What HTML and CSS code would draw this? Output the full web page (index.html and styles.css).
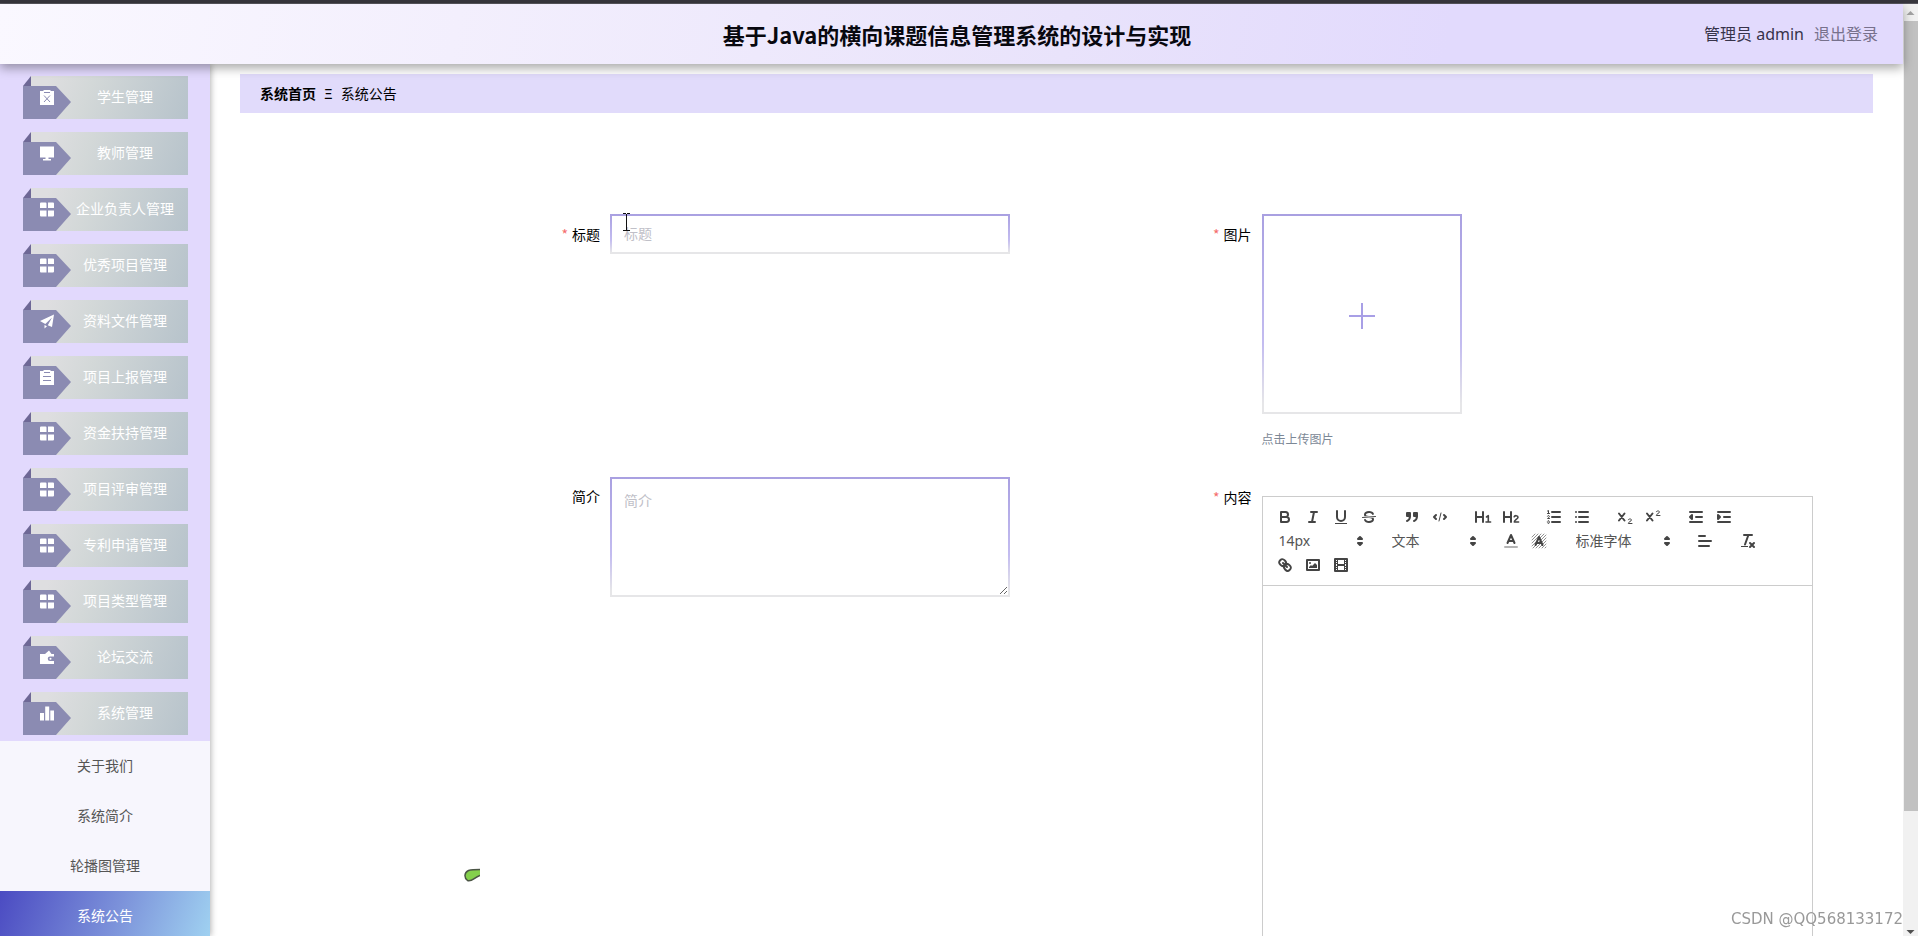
FILE: index.html
```html
<!DOCTYPE html>
<html lang="zh-CN">
<head>
<meta charset="utf-8">
<title>基于Java的横向课题信息管理系统的设计与实现</title>
<link rel="stylesheet" href="styles.css">
</head>
<body>
<svg class="sprite" aria-hidden="true">
  <symbol id="ribbon" viewBox="0 0 48 43"><path fill="#6e6896" d="M0 10L8 0V10Z"/><path fill="#8b8bb2" d="M0 10H33L48 26L33 43H0Z"/></symbol>
  <symbol id="i-grid" viewBox="0 0 14 14"><path fill="#fff" d="M1 0h4.500q1 0 1 1v4.500h-6.500v-4.500q0-1 1-1zM8 0h5q1 0 1 1v4.500h-6zM0 8h6.500v6h-5.500q-1 0-1-1zM8 8h6v5q0 1-1 1h-5z"/></symbol>
  <symbol id="i-clipx" viewBox="0 0 14 15"><path fill="#fff" d="M0 1h3.500V0h7v1H14v14H0z"/><path fill="none" stroke="#8b8bb2" d="M4 2.500h6M4 5.500l6 6.500M10 5.500L4 12"/></symbol>
  <symbol id="i-clip" viewBox="0 0 14 15"><path fill="#fff" d="M0 1h3.500V0h7v1H14v14H0z"/><path fill="none" stroke="#8b8bb2" d="M4 2.500h6M3 6.500h8M3 10.500h8"/></symbol>
  <symbol id="i-screen" viewBox="0 0 14 14"><path fill="#fff" d="M0 0h14v11H0zM5.500 11h3v1.500H11V14H3v-1.500h2.500z"/></symbol>
  <symbol id="i-plane" viewBox="0 0 14 14"><path fill="#fff" d="M14 0L12 12.500L7.800 10.700L12 3L5.300 9.600L0 6.500ZM4.500 10.500L7 11.700L4.500 14Z"/></symbol>
  <symbol id="i-wallet" viewBox="0 0 14 14"><path fill="#fff" d="M0 3.500h5L9 0l2.500 3.500H14V6h-4a2.200 2.200 0 0 0 0 4.500h4V13.500H0z"/><circle cx="10.500" cy="8.200" r="1" fill="#fff"/></symbol>
  <symbol id="i-chart" viewBox="0 0 14 14"><path fill="#fff" d="M0 6.500h4V14H0zM5.200 0h4v14h-4zM10.300 4H14v10h-3.700z"/></symbol>
  <symbol id="i-arrows" viewBox="0 0 18 18"><path fill="#444" stroke="#444" stroke-width="2" stroke-linejoin="round" d="M7 11L9 13L11 11ZM7 7L9 5L11 7Z"/></symbol>
</svg>

<div class="window-edge"></div>
<div class="window">
  <div class="app">
    <header class="topbar">
      <h1 class="topbar-title">基于Java的横向课题信息管理系统的设计与实现</h1>
      <div class="topbar-user"><span>管理员 admin</span><a class="logout" href="#">退出登录</a></div>
    </header>

    <div class="workspace">
      <nav class="sidebar">
        <ul class="menu">
          <li><button class="menu-item" type="button"><span class="tag"><svg class="tag-shape"><use href="#ribbon"/></svg><svg class="tag-icon"><use href="#i-clipx"/></svg></span><span class="menu-label">学生管理</span></button></li>
          <li><button class="menu-item" type="button"><span class="tag"><svg class="tag-shape"><use href="#ribbon"/></svg><svg class="tag-icon"><use href="#i-screen"/></svg></span><span class="menu-label">教师管理</span></button></li>
          <li><button class="menu-item" type="button"><span class="tag"><svg class="tag-shape"><use href="#ribbon"/></svg><svg class="tag-icon"><use href="#i-grid"/></svg></span><span class="menu-label">企业负责人管理</span></button></li>
          <li><button class="menu-item" type="button"><span class="tag"><svg class="tag-shape"><use href="#ribbon"/></svg><svg class="tag-icon"><use href="#i-grid"/></svg></span><span class="menu-label">优秀项目管理</span></button></li>
          <li><button class="menu-item" type="button"><span class="tag"><svg class="tag-shape"><use href="#ribbon"/></svg><svg class="tag-icon"><use href="#i-plane"/></svg></span><span class="menu-label">资料文件管理</span></button></li>
          <li><button class="menu-item" type="button"><span class="tag"><svg class="tag-shape"><use href="#ribbon"/></svg><svg class="tag-icon"><use href="#i-clip"/></svg></span><span class="menu-label">项目上报管理</span></button></li>
          <li><button class="menu-item" type="button"><span class="tag"><svg class="tag-shape"><use href="#ribbon"/></svg><svg class="tag-icon"><use href="#i-grid"/></svg></span><span class="menu-label">资金扶持管理</span></button></li>
          <li><button class="menu-item" type="button"><span class="tag"><svg class="tag-shape"><use href="#ribbon"/></svg><svg class="tag-icon"><use href="#i-grid"/></svg></span><span class="menu-label">项目评审管理</span></button></li>
          <li><button class="menu-item" type="button"><span class="tag"><svg class="tag-shape"><use href="#ribbon"/></svg><svg class="tag-icon"><use href="#i-grid"/></svg></span><span class="menu-label">专利申请管理</span></button></li>
          <li><button class="menu-item" type="button"><span class="tag"><svg class="tag-shape"><use href="#ribbon"/></svg><svg class="tag-icon"><use href="#i-grid"/></svg></span><span class="menu-label">项目类型管理</span></button></li>
          <li><button class="menu-item" type="button"><span class="tag"><svg class="tag-shape"><use href="#ribbon"/></svg><svg class="tag-icon"><use href="#i-wallet"/></svg></span><span class="menu-label">论坛交流</span></button></li>
          <li><button class="menu-item" type="button"><span class="tag"><svg class="tag-shape"><use href="#ribbon"/></svg><svg class="tag-icon"><use href="#i-chart"/></svg></span><span class="menu-label">系统管理</span></button></li>
        </ul>
        <ul class="submenu">
          <li><a class="submenu-item" href="#">关于我们</a></li>
          <li><a class="submenu-item" href="#">系统简介</a></li>
          <li><a class="submenu-item" href="#">轮播图管理</a></li>
          <li><a class="submenu-item active" href="#" aria-current="page">系统公告</a></li>
        </ul>
      </nav>

      <main class="content">
        <div class="breadcrumb"><a class="crumb-home" href="#">系统首页</a><span>Ξ</span><span>系统公告</span></div>

        <form class="notice-form">
          <div class="field">
            <label class="field-label required" for="title">标题</label>
            <div class="field-body">
              <input class="text-input" id="title" type="text" placeholder="标题">
              <svg class="text-cursor" viewBox="0 0 9 18" aria-hidden="true"><path fill="none" stroke="#111" d="M1 .5h3M5 .5h3M4.500 1v16M1 17.500h7"/></svg>
            </div>
          </div>
          <div class="field">
            <label class="field-label required" for="picture">图片</label>
            <div class="field-body">
              <button class="upload" id="picture" type="button" aria-label="点击上传图片"><svg class="plus" viewBox="0 0 26 26"><path stroke="#a89fe6" stroke-width="2" d="M13 0v26M0 13h26"/></svg></button>
              <p class="upload-tip">点击上传图片</p>
            </div>
          </div>
          <div class="field">
            <label class="field-label" for="summary">简介</label>
            <div class="field-body">
              <textarea class="text-area" id="summary" placeholder="简介"></textarea>
            </div>
          </div>
          <div class="field">
            <span class="field-label required" id="body-label">内容</span>
            <div class="field-body editor">
              <div class="toolbar">
                <span class="group">
                  <button class="tool" type="button" aria-label="加粗"><svg viewBox="0 0 18 18"><path d="M5 4H9.500A2.500 2.500 0 0 1 9.500 9H5ZM5 9h5.500A2.500 2.500 0 0 1 10.500 14H5Z"/></svg></button>
                  <button class="tool" type="button" aria-label="斜体"><svg viewBox="0 0 18 18"><path d="M7 4H13M5 14H11M8 14L10 4"/></svg></button>
                  <button class="tool" type="button" aria-label="下划线"><svg viewBox="0 0 18 18"><path d="M5 3V9a4 4 0 0 0 8 0V3"/><rect class="solid" x="3" y="15" width="12" height="1"/></svg></button>
                  <button class="tool" type="button" aria-label="删除线"><svg viewBox="0 0 18 18"><path class="thin" d="M15.500 8.500L2.500 9.500"/><path class="solid" d="M9 8C6.500 7.800 6 7.500 6 6.500 6 5.800 7.300 5 9 5c1.600 0 2.800.7 3 1.300a1 1 0 0 0 1.900-.6C13.400 4.100 11.400 3 9 3 6.200 3 4 4.500 4 6.500a3.200 3.200 0 0 0 .5 1.800ZM9 10C11.500 10.200 12 10.500 12 11.500c0 .7-1.300 1.500-3 1.500-1.600 0-2.800-.7-3-1.300a1 1 0 1 0-1.900.6C4.600 13.900 6.600 15 9 15c2.800 0 5-1.500 5-3.500a3.200 3.200 0 0 0-.5-1.800Z"/></svg></button>
                </span>
                <span class="group">
                  <button class="tool" type="button" aria-label="引用"><svg viewBox="0 0 18 18"><path class="both" d="M4 5h3v3H4zM11 5h3v3h-3z"/><path d="M7 8c0 4-3 5-3 5M14 8c0 4-3 5-3 5"/></svg></button>
                  <button class="tool" type="button" aria-label="代码"><svg viewBox="0 0 18 18"><path d="M5 7L3 9L5 11M13 7L15 9L13 11"/><path class="thin" d="M10 5L8 13"/></svg></button>
                </span>
                <span class="group">
                  <button class="tool" type="button" aria-label="标题1"><svg viewBox="0 0 18 18"><path d="M2 4V14M9 4V14M2 9H9"/><path class="mid" d="M12.500 9L14.300 7.700V14M12 14H16.600"/></svg></button>
                  <button class="tool" type="button" aria-label="标题2"><svg viewBox="0 0 18 18"><path d="M2 4V14M9 4V14M2 9H9"/><path class="mid" d="M12.200 8.700C12.600 7.300 16 7.200 16 9.200C16 11 12.300 12 12.300 14H16.600"/></svg></button>
                </span>
                <span class="group">
                  <button class="tool" type="button" aria-label="有序列表"><svg viewBox="0 0 18 18"><path d="M7 4H15M7 9H15M7 14H15"/><path class="thin" d="M2.500 3L3.500 2.500V5.500M2.500 5.500H4.500M4.500 10.500h-2c0-.2 1.900-1.100 1.900-2.200A1 1 0 0 0 2.500 8.200M2.500 14.800a1 1 0 0 0 1.900-.1A.7.7 0 0 0 3.700 14a.7.7 0 0 0 .6-.7 1 1 0 0 0-1.800-.1"/></svg></button>
                  <button class="tool" type="button" aria-label="无序列表"><svg viewBox="0 0 18 18"><path d="M6 4H15M6 9H15M6 14H15M3 4v.01M3 9v.01M3 14v.01"/></svg></button>
                </span>
                <span class="group">
                  <button class="tool" type="button" aria-label="下标"><svg viewBox="0 0 18 18"><path d="M3 5.500L8.500 12.500M8.500 5.500L3 12.500"/><path class="thin" d="M12.300 11.700C12.500 10.600 15.500 10.600 15.500 12C15.500 13.200 12.300 13.800 12.300 15.500H16"/></svg></button>
                  <button class="tool" type="button" aria-label="上标"><svg viewBox="0 0 18 18"><path d="M3 5.500L8.500 12.500M8.500 5.500L3 12.500"/><path class="thin" d="M12.300 3.700C12.500 2.600 15.500 2.600 15.500 4C15.500 5.200 12.300 5.800 12.300 7.500H16"/></svg></button>
                </span>
                <span class="group">
                  <button class="tool" type="button" aria-label="减少缩进"><svg viewBox="0 0 18 18"><path d="M3 14H15M3 4H15M9 9H15"/><path class="both" d="M5 7V11L3 9Z"/></svg></button>
                  <button class="tool" type="button" aria-label="增加缩进"><svg viewBox="0 0 18 18"><path d="M3 14H15M3 4H15M9 9H15"/><path class="both" d="M3 7V11L5 9Z"/></svg></button>
                </span>
                <span class="group picker">
                  <select class="picker-select" aria-label="字号"><option>14px</option></select><svg class="picker-arrow"><use href="#i-arrows"/></svg>
                </span>
                <span class="group picker">
                  <select class="picker-select" aria-label="段落格式"><option>文本</option></select><svg class="picker-arrow"><use href="#i-arrows"/></svg>
                </span>
                <span class="group">
                  <button class="tool" type="button" aria-label="文字颜色"><svg viewBox="0 0 18 18"><path opacity=".4" d="M3 15H15"/><path d="M5.500 11L9 3L12.500 11M11.600 9H6.400"/></svg></button>
                  <button class="tool" type="button" aria-label="背景颜色"><svg viewBox="0 0 18 18"><path class="hair" d="M2 5L5 2M2 8L8 2M2 11L11 2M2 14L14 2M3 16L16 3M6 16L16 6M9 16L16 9M12 16L16 12M15 16L16 15"/><path d="M5.500 13L9 5L12.500 13M11.600 11H6.400"/></svg></button>
                </span>
                <span class="group picker picker-wide">
                  <select class="picker-select" aria-label="字体"><option>标准字体</option></select><svg class="picker-arrow"><use href="#i-arrows"/></svg>
                </span>
                <span class="group">
                  <button class="tool" type="button" aria-label="对齐"><svg viewBox="0 0 18 18"><path d="M3 9H15M3 14H13M3 4H9"/></svg></button>
                </span>
                <span class="group">
                  <button class="tool" type="button" aria-label="清除格式"><svg viewBox="0 0 18 18"><path d="M5 3H13M6 12.500L9.400 3M11 11L15 15M15 11L11 15"/><rect class="solid" x="2" y="14" width="7" height="1"/></svg></button>
                </span>
                <span class="group">
                  <button class="tool" type="button" aria-label="链接"><svg viewBox="0 0 18 18"><path d="M7 7L11 11M8.900 4.577a3.476 3.476 0 0 1 .36 4.679A3.476 3.476 0 0 1 4.577 8.900C3.185 7.500 2.035 6.400 4.217 4.217S7.500 3.185 8.900 4.577ZM13.423 9.100a3.476 3.476 0 0 0-4.679-.36 3.476 3.476 0 0 0 .36 4.679c1.392 1.392 2.500 2.542 4.679.36S14.815 10.500 13.423 9.100Z"/></svg></button>
                  <button class="tool" type="button" aria-label="图片"><svg viewBox="0 0 18 18"><rect x="3" y="4" width="12" height="10"/><circle class="solid" cx="6" cy="7" r="1"/><path class="solid" d="M5 12V11L7 9L8 10L11 7L13 9V12Z"/></svg></button>
                  <button class="tool" type="button" aria-label="视频"><svg viewBox="0 0 18 18"><rect x="3" y="3" width="12" height="12"/><path class="solid" d="M5 3h1v12H5zM12 3h1v12h-1zM5 8h8v2H5zM3 5h3v1H3zM3 7h3v1H3zM3 10h3v1H3zM3 12h3v1H3zM12 5h3v1h-3zM12 7h3v1h-3zM12 10h3v1h-3zM12 12h3v1h-3z"/></svg></button>
                </span>
              </div>
              <div class="editor-area" contenteditable="true" role="textbox" aria-labelledby="body-label"></div>
            </div>
          </div>
        </form>
      </main>
    </div>
  </div>

  <div class="scrollbar" aria-hidden="true">
    <svg class="scroll-arrow" viewBox="0 0 14 17"><path fill="#a3a3a3" d="M3 11L7 7L11 11Z"/></svg>
    <div class="scroll-track"><div class="scroll-thumb"></div></div>
    <svg class="scroll-arrow" viewBox="0 0 14 17"><path fill="#505050" d="M3 11L7 15L11 11Z"/></svg>
  </div>
</div>

<svg class="leaf" viewBox="0 0 16 14" aria-hidden="true"><path fill="#84d04c" d="M16 1.500C12 1.500 8 1.500 4.500 2.500C0 4.500 0 10 3.500 12.500C8 14 10 9.500 16 7.500Z"/><path fill="none" stroke="#4b5545" stroke-width="1.500" d="M16 1.500C12 1.500 8 1.500 4.500 2.500C0 4.500 0 10 3.500 12.500C8 14 10 9.500 16 7.500"/></svg>
<div class="watermark">CSDN @QQ568133172</div>
</body>
</html>
```
FILE: styles.css
```css
* {
  box-sizing: border-box;
}

body {
  margin: 0;
  height: 100vh;
  display: flex;
  flex-direction: column;
  overflow: hidden;
  background: #fff;
  color: #000;
  font: 14px/20px "Noto Sans", "Noto Sans CJK SC", sans-serif;
}

button,
input,
textarea,
select {
  margin: 0;
  padding: 0;
  border: 0;
  background: none;
  font: inherit;
  color: inherit;
}

ul {
  margin: 0;
  padding: 0;
  list-style: none;
}

a {
  color: inherit;
  text-decoration: none;
}

.sprite {
  position: absolute;
  width: 0;
  height: 0;
}

.window-edge {
  flex: none;
  height: 4px;
  background: linear-gradient(#37363d 75%, #77767e);
}

.window {
  flex: 1;
  min-height: 0;
  display: flex;
}

.app {
  flex: 1;
  min-width: 0;
  display: flex;
  flex-direction: column;
}

/* Top bar */
.topbar {
  position: relative;
  z-index: 2;
  flex: none;
  display: grid;
  grid-template-columns: 1fr auto 1fr;
  align-items: center;
  height: 60px;
  padding: 0 25px 0 36px;
  background: linear-gradient(100deg, #faf8ff, #f3effd 24%, #e9e3fb 56%, #e2dafd 76%);
  box-shadow: 0 4px 10px rgba(0, 0, 0, 0.35);
}

.topbar-title {
  grid-column: 2;
  margin: 0;
  font-family: "Noto Sans CJK SC", sans-serif;
  font-size: 22px;
  line-height: 32px;
  font-weight: 700;
  color: #08080f;
}

.topbar-user {
  display: flex;
  justify-content: flex-end;
  gap: 10px;
  font-size: 16px;
  line-height: 24px;
  color: #37334a;
}

.logout {
  color: #77718c;
}

.workspace {
  flex: 1;
  min-height: 0;
  display: flex;
}

/* Sidebar */
.sidebar {
  flex: none;
  width: 210px;
  background: #e2d9fd;
  box-shadow: 1px 0 6px rgba(0, 0, 0, 0.3);
}

.menu {
  display: flex;
  flex-direction: column;
  gap: 13px;
  padding: 12px 22px 6px 23px;
}

.menu li {
  display: flex;
}

.menu-item {
  display: flex;
  align-items: center;
  width: 100%;
  height: 43px;
  padding-right: 9px;
  background: linear-gradient(110deg, #dedee0 10%, #d3d8d8 35%, #b7c3cb 95%) 8px 0 no-repeat;
  color: #fff;
}

.tag {
  position: relative;
  flex: none;
  width: 48px;
  height: 43px;
}

.tag-shape {
  display: block;
  width: 48px;
  height: 43px;
}

.tag-icon {
  position: absolute;
  left: 17px;
  top: 14px;
  width: 14px;
  height: 15px;
}

.menu-label {
  flex: 1;
  padding-bottom: 2px;
  text-align: center;
  white-space: nowrap;
}

.submenu {
  background: #f7f6fd;
}

.submenu-item {
  display: block;
  line-height: 50px;
  text-align: center;
  color: #555;
}

.submenu-item.active {
  background: linear-gradient(110deg, #4b4bc2, #7c92da 55%, #a0d2f1);
  color: #fff;
}

/* Content */
.content {
  flex: 1;
  min-width: 0;
  padding: 10px 30px 0;
  overflow: hidden;
}

.breadcrumb {
  display: flex;
  gap: 8px;
  padding: 10px 20px 9px;
  background: #e1dbfb;
}

.crumb-home {
  font-weight: 600;
}

.notice-form {
  display: grid;
  grid-template-columns: 1fr 1fr;
  row-gap: 17px;
  padding: 101px 60px 0 270px;
}

.field {
  display: flex;
  align-items: flex-start;
  min-width: 0;
}

.field-label {
  flex: none;
  width: 100px;
  padding-right: 10px;
  line-height: 40px;
  text-align: right;
}

.required::before {
  content: "*";
  margin-right: 4px;
  font-family: "Noto Sans CJK SC", sans-serif;
  color: #f56c6c;
}

.field-body {
  position: relative;
  flex: 1;
  min-width: 0;
}

.text-input,
.text-area,
.upload {
  display: block;
  border: 2px solid #aaa1e3;
  border-image: linear-gradient(#a9a0e1, #c3bcf0 65%, #e6e6e8 95%) 2;
}

.text-input,
.text-area {
  width: 100%;
  max-width: 400px;
  padding: 0 12px;
}

.text-input {
  height: 40px;
  padding-bottom: 2px;
}

.text-area {
  height: 120px;
  padding: 12px;
  resize: vertical;
}

.text-input::placeholder,
.text-area::placeholder {
  color: #c0c0c8;
}

.text-cursor {
  position: absolute;
  left: 12px;
  top: -1px;
  width: 9px;
  height: 18px;
}

.upload {
  display: grid;
  place-items: center;
  width: 200px;
  height: 200px;
  padding-top: 4px;
}

.plus {
  width: 26px;
  height: 26px;
}

.upload-tip {
  margin: 6px 0 0;
  font-size: 12px;
  line-height: 40px;
  color: #7c8896;
}

/* Rich text editor */
.editor {
  margin-top: 19px;
  border: 1px solid #ccc;
}

.toolbar {
  display: flex;
  flex-wrap: wrap;
  column-gap: 15px;
  padding: 8px;
  border-bottom: 1px solid #ccc;
}

.group {
  display: flex;
}

.tool {
  width: 28px;
  height: 24px;
  padding: 3px 5px;
}

.tool svg {
  display: block;
  width: 18px;
  height: 18px;
  fill: none;
  stroke: #444;
  stroke-width: 2;
  stroke-linecap: round;
  stroke-linejoin: round;
}

.tool .thin {
  stroke-width: 1;
}

.tool .mid {
  stroke-width: 1.6;
}

.tool .hair {
  stroke-width: 0.6;
}

.tool .solid {
  fill: #444;
  stroke: none;
}

.tool .both {
  fill: #444;
}

.picker {
  position: relative;
  width: 98px;
}

.picker-wide {
  width: 108px;
}

.picker-select {
  width: 100%;
  height: 24px;
  padding: 0 18px 0 8px;
  appearance: none;
  color: #555;
}

.picker-arrow {
  position: absolute;
  right: 0;
  top: 3px;
  width: 18px;
  height: 18px;
  pointer-events: none;
}

.editor-area {
  min-height: 500px;
  padding: 12px 15px;
}

/* Page scrollbar */
.scrollbar {
  flex: none;
  display: flex;
  flex-direction: column;
  width: 15px;
  background: #f1f1f1;
}

.scroll-arrow {
  flex: none;
  width: 15px;
  height: 17px;
}

.scroll-track {
  flex: 1;
  padding-left: 1px;
}

.scroll-thumb {
  height: 88%;
  background: #c1c1c1;
}

/* Overlays */
.leaf {
  position: fixed;
  left: 464px;
  top: 868px;
  width: 16px;
  height: 14px;
}

.watermark {
  position: fixed;
  right: 15px;
  bottom: 7px;
  font: 15px/20px "DejaVu Sans", sans-serif;
  color: #999;
  text-shadow: 1px 1px 0 #fff;
}
```
